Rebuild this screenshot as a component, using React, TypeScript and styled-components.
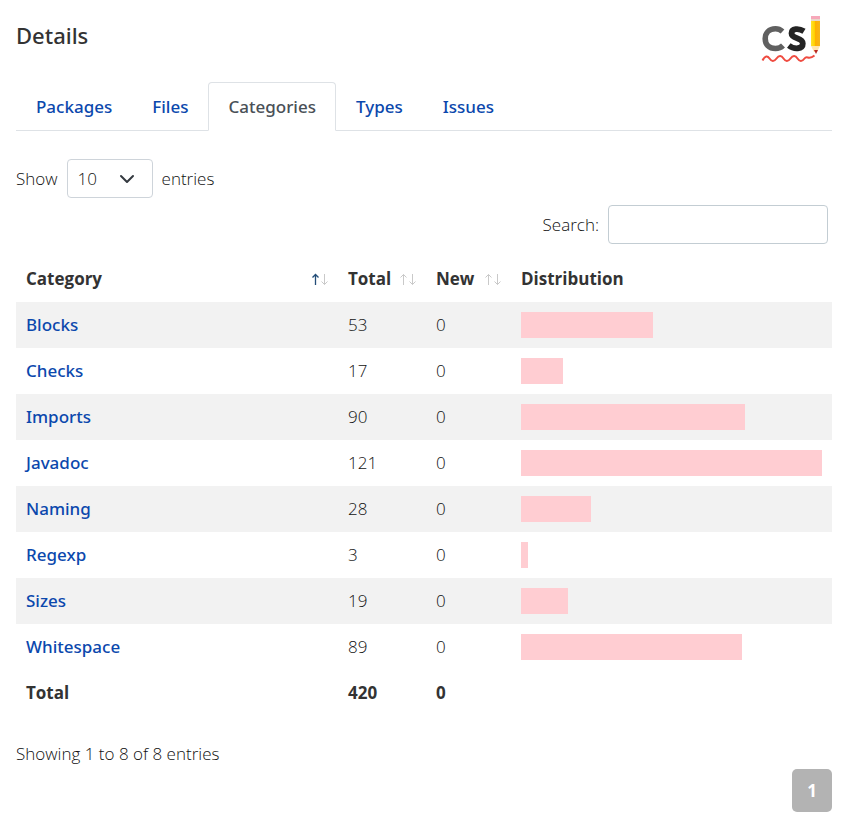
import React from "react";
import styled, { createGlobalStyle } from "styled-components";

const mediumFont = `"Segoe UI", "Noto Sans", "Open Sans", sans-serif`;

const GlobalStyle = createGlobalStyle`
  *, *::before, *::after { box-sizing: border-box; }
  body {
    margin: 0;
    background: #fff;
    color: #111;
    font-family: "Segoe UI", "Open Sans", "Noto Sans", sans-serif;
    font-size: 17px;
    font-weight: 300;
    line-height: 26px;
  }
`;

const Page = styled.main`
  padding: 14px 11px 8px 16px;
`;

const Header = styled.header`
  display: flex;
  justify-content: space-between;
  align-items: flex-start;
  height: 68px;
  padding-right: 11px;
`;

const Title = styled.h1`
  margin: 6px 0 0;
  color: #333;
  font-family: ${mediumFont};
  font-size: 22px;
  line-height: 30px;
  font-weight: 500;
`;

const Tabs = styled.nav`
  display: flex;
  height: 49px;
  border-bottom: 1px solid #dee2e6;
`;

const Tab = styled.a<{ $active?: boolean }>`
  height: 49px;
  padding: 11px 19px;
  border: 1px solid ${(p) => (p.$active ? "#dee2e6" : "transparent")};
  border-bottom-color: ${(p) => (p.$active ? "#fff" : "transparent")};
  border-radius: 4px 4px 0 0;
  background: ${(p) => (p.$active ? "#fff" : "transparent")};
  color: ${(p) => (p.$active ? "#495057" : "#0b48ad")};
  font-family: ${mediumFont};
  font-weight: 500;
  text-decoration: none;
`;

const Panel = styled.section`
  display: flex;
  flex-direction: column;
  padding-top: 28px;
`;

const LengthField = styled.label`
  display: flex;
  align-items: center;
  align-self: flex-start;
  gap: 9px;
`;

const SelectBox = styled.span`
  display: grid;
  align-items: center;
  width: 86px;
`;

const Select = styled.select`
  grid-area: 1 / 1;
  width: 100%;
  height: 39px;
  padding: 0 10px;
  appearance: none;
  border: 1px solid #ced4da;
  border-radius: 4px;
  background: #fff;
  color: inherit;
  font: inherit;
`;

const Chevron = styled.svg`
  grid-area: 1 / 1;
  justify-self: end;
  margin-right: 18px;
  pointer-events: none;
`;

const SearchField = styled.label`
  display: flex;
  align-items: center;
  align-self: flex-end;
  gap: 9px;
  margin: 7px 4px 12px 0;
`;

const SearchInput = styled.input`
  width: 220px;
  height: 39px;
  padding: 0 10px;
  border: 1px solid #c3cdd3;
  border-radius: 4px;
  background: #fff;
  color: inherit;
  font: inherit;
`;

const Table = styled.table`
  width: 100%;
  table-layout: fixed;
  border-collapse: collapse;
`;

const Column = styled.col<{ $width?: number }>`
  width: ${(p) => (p.$width ? `${p.$width}px` : "auto")};
`;

const Row = styled.tr<{ $striped?: boolean }>`
  background: ${(p) => (p.$striped ? "#f2f2f2" : "transparent")};
`;

const Cell = styled.td`
  padding: 10px;
  text-align: left;
`;

const HeadCell = styled.th`
  padding: 10px;
  color: #333;
  text-align: left;
  font-weight: 700;
`;

const SortButton = styled.button`
  display: flex;
  justify-content: space-between;
  align-items: center;
  width: 100%;
  padding: 0;
  border: 0;
  background: none;
  color: inherit;
  font: inherit;
`;

const CategoryLink = styled.a`
  color: #0b48ad;
  font-family: ${mediumFont};
  font-weight: 500;
  text-decoration: none;
`;

const Bar = styled.div`
  height: 26px;
  background: #ffcdd2;
`;

const Info = styled.p`
  margin: 25px 0 0;
`;

const Pagination = styled.nav`
  align-self: flex-end;
  margin-top: 2px;
`;

const PageButton = styled.button`
  width: 40px;
  height: 43px;
  padding: 0;
  border: 0;
  border-radius: 5px;
  background: #b3b3b3;
  color: #fff;
  font: inherit;
  font-weight: 700;
`;

const PanelBody = styled.div`
  display: flex;
  flex-direction: column;
`;

function Logo() {
  return (
    <svg width="60" height="48" viewBox="0 0 60 48" role="img" aria-label="CheckStyle">
      <defs>
        <linearGradient id="pencil" x1="0" x2="1" y1="0" y2="0">
          <stop offset="0" stopColor="#ffe32e" />
          <stop offset="0.4" stopColor="#ffd000" />
          <stop offset="0.5" stopColor="#ffb000" />
          <stop offset="1" stopColor="#f5b51c" />
        </linearGradient>
      </defs>
      <path d="M21.500 17.500C19 15.300 17 14.800 14.500 14.800C8 14.800 4.200 19 4.200 24.800C4.200 30.500 8 34.500 14.500 34.500C17.500 34.500 20 33.500 22 31.500" fill="none" stroke="#606060" strokeWidth="5.600" />
      <path d="M43 17.300C37.500 13.800 30.500 14.500 30.500 19.200C30.500 25.500 41.800 23 41.800 29.500C41.800 35.500 33 35.500 27.800 31.500" fill="none" stroke="#242424" strokeWidth="5.800" />
      <path d="M50 2h9v5h-9z" fill="#f7a8ba" />
      <path d="M50 5h9v2h-9z" fill="#e8d8c9" />
      <path d="M50 7h9v25h-9z" fill="url(#pencil)" />
      <path d="M50 32h9l-3 6h-3z" fill="#ffe5ae" />
      <path d="M53 36h4l-2 4z" fill="#b92924" />
      <path d="M1.500 46.500C4 41.500 6.500 41.500 8.500 44.500S13 48 15.500 44.500S20.500 41.500 22.500 44.500S27 48 29.500 44.500S34.500 41.500 36.500 44.500S41 48 43.500 44.500S47.500 46.500 53.500 41.500" fill="none" stroke="#ef4b40" strokeWidth="2" />
    </svg>
  );
}

function SortIcon({ ascending }: { ascending?: boolean }) {
  return (
    <svg width="17" height="14" viewBox="0 0 17 14" fill="none" strokeWidth="1" aria-hidden="true">
      <path
        d="M4.500 13V2.500M1.500 5.500L4.500 2.500L7.500 5.500"
        stroke={ascending ? "#234d78" : "#c9c9c9"}
        strokeWidth={ascending ? 1.3 : 1}
      />
      <path d="M13.500 2V12.500M10.500 9.500L13.500 12.500L16.500 9.500" stroke="#c9c9c9" />
    </svg>
  );
}

const tabs = ["Packages", "Files", "Categories", "Types", "Issues"];

const categories = [
  { name: "Blocks", total: 53, fresh: 0 },
  { name: "Checks", total: 17, fresh: 0 },
  { name: "Imports", total: 90, fresh: 0 },
  { name: "Javadoc", total: 121, fresh: 0 },
  { name: "Naming", total: 28, fresh: 0 },
  { name: "Regexp", total: 3, fresh: 0 },
  { name: "Sizes", total: 19, fresh: 0 },
  { name: "Whitespace", total: 89, fresh: 0 },
];

const largest = Math.max(...categories.map((c) => c.total));
const sum = categories.reduce((n, c) => n + c.total, 0);

export default function App() {
  return (
    <Page>
      <GlobalStyle />
      <Header>
        <Title>Details</Title>
        <Logo />
      </Header>
      <PanelBody>
        <Tabs>
          {tabs.map((name) => (
            <Tab key={name} href={`#${name}`} $active={name === "Categories"}>
              {name}
            </Tab>
          ))}
        </Tabs>
        <Panel>
          <LengthField>
            Show
            <SelectBox>
              <Select defaultValue="10">
                <option>10</option>
                <option>25</option>
                <option>50</option>
              </Select>
              <Chevron width="16" height="16" viewBox="0 0 16 16" fill="none" aria-hidden="true">
                <path d="M2 5L8 11L14 5" stroke="#343a40" strokeWidth="2" strokeLinecap="round" strokeLinejoin="round" />
              </Chevron>
            </SelectBox>
            entries
          </LengthField>
          <SearchField>
            Search:
            <SearchInput type="search" />
          </SearchField>
          <Table>
            <colgroup>
              <Column />
              <Column $width={88} />
              <Column $width={85} />
              <Column $width={321} />
            </colgroup>
            <thead>
              <Row>
                <HeadCell aria-sort="ascending">
                  <SortButton>
                    Category <SortIcon ascending />
                  </SortButton>
                </HeadCell>
                <HeadCell>
                  <SortButton>
                    Total <SortIcon />
                  </SortButton>
                </HeadCell>
                <HeadCell>
                  <SortButton>
                    New <SortIcon />
                  </SortButton>
                </HeadCell>
                <HeadCell>Distribution</HeadCell>
              </Row>
            </thead>
            <tbody>
              {categories.map((c, i) => (
                <Row key={c.name} $striped={i % 2 === 0}>
                  <Cell>
                    <CategoryLink href={`#${c.name}`}>{c.name}</CategoryLink>
                  </Cell>
                  <Cell>{c.total}</Cell>
                  <Cell>{c.fresh}</Cell>
                  <Cell>
                    <Bar style={{ width: `${(c.total / largest) * 100}%` }} />
                  </Cell>
                </Row>
              ))}
            </tbody>
            <tfoot>
              <Row>
                <HeadCell scope="row">Total</HeadCell>
                <HeadCell>{sum}</HeadCell>
                <HeadCell>0</HeadCell>
                <HeadCell />
              </Row>
            </tfoot>
          </Table>
          <Info>Showing 1 to 8 of 8 entries</Info>
          <Pagination aria-label="Pages">
            <PageButton aria-current="page">1</PageButton>
          </Pagination>
        </Panel>
      </PanelBody>
    </Page>
  );
}
